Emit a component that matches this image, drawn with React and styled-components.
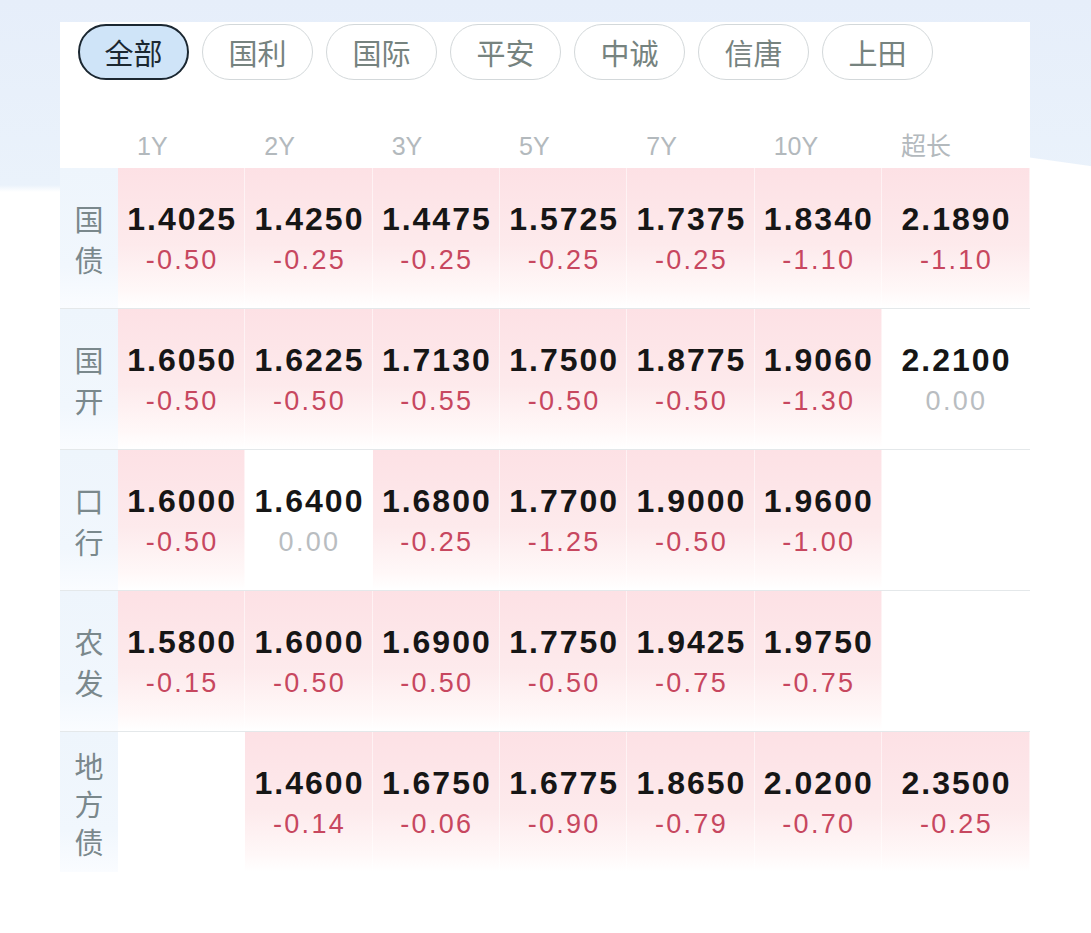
import React from 'react';
import styled, { createGlobalStyle } from 'styled-components';

const GlobalStyle = createGlobalStyle`
  html, body {
    margin: 0;
    padding: 0;
    background: #fff;
  }
  body {
    font-family: 'Liberation Sans', 'Noto Sans CJK SC', sans-serif;
  }
`;

const Page = styled.div`
  min-height: 933px;
  box-sizing: border-box;
  padding: 22px 61px 0 60px;
  background:
    linear-gradient(188deg, transparent 0, transparent 164px, #fff 165px) right top / 61px 200px no-repeat,
    linear-gradient(to bottom, #e6eefa 0, #eaf2fb 185px, #fff 192px);
`;

const Card = styled.div`
  background: #fff;
  padding-top: 2px;
`;

const TabBar = styled.div`
  display: flex;
  gap: 13px;
  padding-left: 18px;
`;

const Tab = styled.button`
  box-sizing: border-box;
  width: 111px;
  height: 56px;
  border-radius: 28px;
  border: ${({ $active }) => ($active ? '2px solid #1b2731' : '1.5px solid #d3d8da')};
  background: ${({ $active }) => ($active ? '#cfe4f8' : '#fff')};
  color: ${({ $active }) => ($active ? '#1b2731' : '#76837f')};
  font-family: 'Noto Sans CJK SC', sans-serif;
  font-size: 29px;
  line-height: 1;
  padding: 0;
  cursor: pointer;
`;

const Grid = styled.div`
  display: grid;
  grid-template-columns: 58px repeat(6, 127.33px) 1fr;
`;

const HeaderRow = styled(Grid)`
  height: 88px;
  align-items: end;
`;

const HeadLabel = styled.div`
  padding: 0 0 7px 19px;
  font-family: 'Liberation Sans', 'Noto Sans CJK SC', sans-serif;
  font-size: 25px;
  line-height: 30px;
  color: #b3b9bd;
`;

const Row = styled(Grid)`
  height: 140px;
  border-bottom: ${({ $last }) => ($last ? 'none' : '1.5px solid #e4e8ea')};
`;

const RowLabel = styled.div`
  display: flex;
  flex-direction: column;
  align-items: center;
  justify-content: center;
  padding-top: 2px;
  background: linear-gradient(to bottom, #eef5fc 0%, #f1f7fd 70%, #fafcff 100%);
  font-family: 'Noto Sans CJK SC', sans-serif;
  font-size: 29px;
  line-height: ${({ $tall }) => ($tall ? '38px' : '41px')};
  color: #7a888c;
`;

const Cell = styled.div`
  display: flex;
  flex-direction: column;
  align-items: center;
  justify-content: center;
  padding: 4px 0 0 2px;
  border-right: 1px solid rgba(255, 255, 255, 0.55);
  background: ${({ $pink }) =>
    $pink ? 'linear-gradient(to bottom, #fde1e5 0%, #fdeaec 55%, #fff8f8 88%, #ffffff 100%)' : '#fff'};
`;

const Value = styled.div`
  font-family: 'Liberation Sans', sans-serif;
  font-weight: 700;
  font-size: 32px;
  letter-spacing: 2px;
  line-height: 41px;
  color: #161616;
`;

const Change = styled.div`
  font-family: 'Liberation Sans', sans-serif;
  font-size: 27px;
  letter-spacing: 2.3px;
  line-height: 41px;
  color: ${({ $flat }) => ($flat ? '#b9bdc1' : '#c7475f')};
`;

const tabs = ['全部', '国利', '国际', '平安', '中诚', '信唐', '上田'];
const terms = ['1Y', '2Y', '3Y', '5Y', '7Y', '10Y', '超长'];

const rows = [
  {
    name: '国债',
    cells: [
      ['1.4025', '-0.50'], ['1.4250', '-0.25'], ['1.4475', '-0.25'], ['1.5725', '-0.25'],
      ['1.7375', '-0.25'], ['1.8340', '-1.10'], ['2.1890', '-1.10'],
    ],
  },
  {
    name: '国开',
    cells: [
      ['1.6050', '-0.50'], ['1.6225', '-0.50'], ['1.7130', '-0.55'], ['1.7500', '-0.50'],
      ['1.8775', '-0.50'], ['1.9060', '-1.30'], ['2.2100', '0.00'],
    ],
  },
  {
    name: '口行',
    cells: [
      ['1.6000', '-0.50'], ['1.6400', '0.00'], ['1.6800', '-0.25'], ['1.7700', '-1.25'],
      ['1.9000', '-0.50'], ['1.9600', '-1.00'], null,
    ],
  },
  {
    name: '农发',
    cells: [
      ['1.5800', '-0.15'], ['1.6000', '-0.50'], ['1.6900', '-0.50'], ['1.7750', '-0.50'],
      ['1.9425', '-0.75'], ['1.9750', '-0.75'], null,
    ],
  },
  {
    name: '地方债',
    cells: [
      null, ['1.4600', '-0.14'], ['1.6750', '-0.06'], ['1.6775', '-0.90'],
      ['1.8650', '-0.79'], ['2.0200', '-0.70'], ['2.3500', '-0.25'],
    ],
  },
];

const QuoteCell = ({ cell }) => {
  if (!cell) return <Cell />;
  const [value, change] = cell;
  const flat = change === '0.00';
  return (
    <Cell $pink={!flat}>
      <Value>{value}</Value>
      <Change $flat={flat}>{change}</Change>
    </Cell>
  );
};

const App = () => (
  <Page>
    <GlobalStyle />
    <Card>
      <TabBar>
        {tabs.map((t, i) => (
          <Tab key={t} $active={i === 0}>
            {t}
          </Tab>
        ))}
      </TabBar>
      <HeaderRow>
        <div />
        {terms.map(t => (
          <HeadLabel key={t}>{t}</HeadLabel>
        ))}
      </HeaderRow>
      {rows.map((row, r) => (
        <Row key={row.name} $last={r === rows.length - 1}>
          <RowLabel $tall={row.name.length > 2}>
            {row.name.split('').map((ch, i) => (
              <span key={i}>{ch}</span>
            ))}
          </RowLabel>
          {row.cells.map((cell, c) => (
            <QuoteCell key={c} cell={cell} />
          ))}
        </Row>
      ))}
    </Card>
  </Page>
);

export default App;
